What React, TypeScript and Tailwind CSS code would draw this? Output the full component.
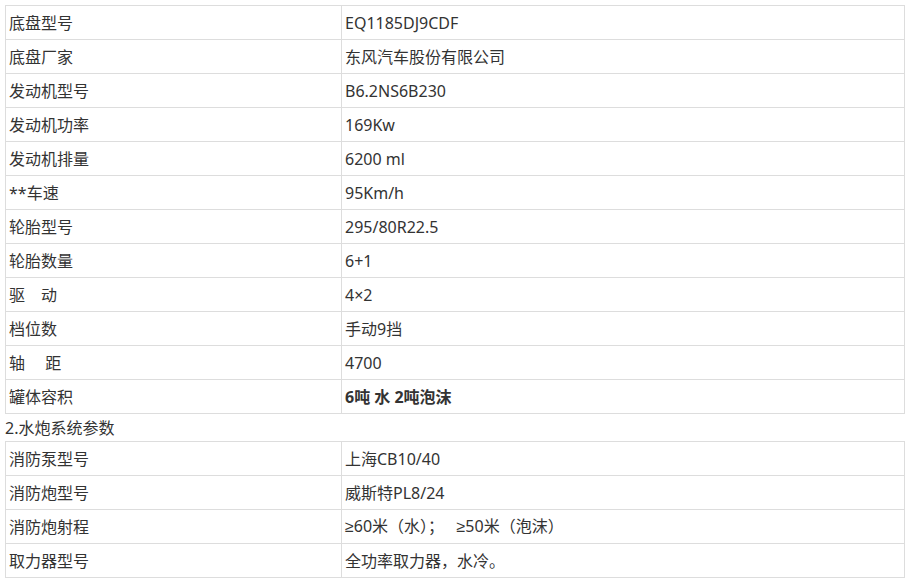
import React from "react";

const Ge = () => <span style={{ fontFamily: '"Liberation Sans", sans-serif' }}>≥</span>;

const t1: [string, React.ReactNode][] = [
  ["底盘型号", "EQ1185DJ9CDF"],
  ["底盘厂家", "东风汽车股份有限公司"],
  ["发动机型号", "B6.2NS6B230"],
  ["发动机功率", "169Kw"],
  ["发动机排量", "6200 ml"],
  ["**车速", "95Km/h"],
  ["轮胎型号", "295/80R22.5"],
  ["轮胎数量", "6+1"],
  ["驱\u3000动", "4×2"],
  ["档位数", "手动9挡"],
  ["轴\u3000 距", "4700"],
  ["罐体容积", <b className="font-bold">6吨 水 2吨泡沫</b>],
];

const t2: [string, React.ReactNode][] = [
  ["消防泵型号", "上海CB10/40"],
  ["消防炮型号", "威斯特PL8/24"],
  [
    "消防炮射程",
    <span>
      <Ge />60米（水）；{"   "}<Ge />50米（泡沫）
    </span>,
  ],
  ["取力器型号", "全功率取力器，水冷。"],
];

function Table({ rows }: { rows: [string, React.ReactNode][] }) {
  return (
    <div className="w-[900px] border-t border-l border-[#dddddd]">
      {rows.map(([k, v], i) => (
        <div key={i} className="grid grid-cols-[336px_1fr] h-[34px]">
          <div className="border-r border-b border-[#dddddd] flex items-center pl-[3px] whitespace-pre">{k}</div>
          <div className="border-r border-b border-[#dddddd] flex items-center pl-[3px] whitespace-pre">{v}</div>
        </div>
      ))}
    </div>
  );
}

export default function App() {
  return (
    <div
      className="w-[908px] h-[578px] bg-white p-[5px] text-[16px] text-[#333333] overflow-hidden"
      style={{ fontFamily: '"Noto Sans", "Noto Sans CJK SC", sans-serif' }}
    >
      <Table rows={t1} />
      <div className="h-[27px] flex items-center">2.水炮系统参数</div>
      <Table rows={t2} />
    </div>
  );
}
